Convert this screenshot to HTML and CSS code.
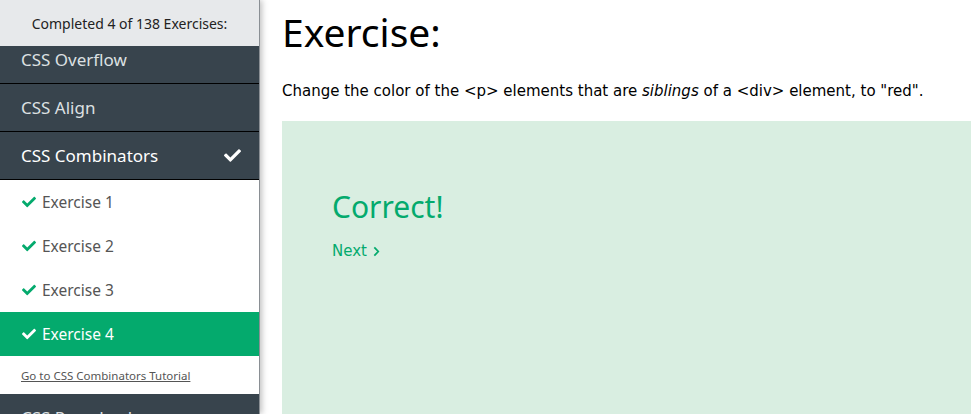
FILE: index.html
```html
<!DOCTYPE html>
<html>
<head>
<meta charset="utf-8">
<link rel="stylesheet" href="styles.css">
</head>
<body>
<div class="page">
  <aside class="sidebar">
    <div class="progress">Completed 4 of 138 Exercises:</div>
    <div class="scroller">
      <ul class="topics">
        <li class="topic first">CSS Overflow</li>
        <li class="topic">CSS Align</li>
        <li class="topic active">CSS Combinators
          <svg class="topic-check" viewBox="0 0 512 512"><path d="M173.898 439.404l-166.4-166.4c-9.997-9.997-9.997-26.206 0-36.204l36.203-36.204c9.997-9.998 26.207-9.998 36.204 0L192 312.69 432.095 72.596c9.997-9.997 26.207-9.997 36.204 0l36.203 36.204c9.997 9.997 9.997 26.206 0 36.204l-294.4 294.401c-9.998 9.997-26.207 9.997-36.204-.001z"/></svg>
        </li>
        <li class="exercises">
          <a class="ex"><svg class="ex-check" viewBox="0 0 512 512"><path d="M173.898 439.404l-166.4-166.4c-9.997-9.997-9.997-26.206 0-36.204l36.203-36.204c9.997-9.998 26.207-9.998 36.204 0L192 312.69 432.095 72.596c9.997-9.997 26.207-9.997 36.204 0l36.203 36.204c9.997 9.997 9.997 26.206 0 36.204l-294.4 294.401c-9.998 9.997-26.207 9.997-36.204-.001z"/></svg>Exercise 1</a>
          <a class="ex"><svg class="ex-check" viewBox="0 0 512 512"><path d="M173.898 439.404l-166.4-166.4c-9.997-9.997-9.997-26.206 0-36.204l36.203-36.204c9.997-9.998 26.207-9.998 36.204 0L192 312.69 432.095 72.596c9.997-9.997 26.207-9.997 36.204 0l36.203 36.204c9.997 9.997 9.997 26.206 0 36.204l-294.4 294.401c-9.998 9.997-26.207 9.997-36.204-.001z"/></svg>Exercise 2</a>
          <a class="ex"><svg class="ex-check" viewBox="0 0 512 512"><path d="M173.898 439.404l-166.4-166.4c-9.997-9.997-9.997-26.206 0-36.204l36.203-36.204c9.997-9.998 26.207-9.998 36.204 0L192 312.69 432.095 72.596c9.997-9.997 26.207-9.997 36.204 0l36.203 36.204c9.997 9.997 9.997 26.206 0 36.204l-294.4 294.401c-9.998 9.997-26.207 9.997-36.204-.001z"/></svg>Exercise 3</a>
          <a class="ex current"><svg class="ex-check" viewBox="0 0 512 512"><path d="M173.898 439.404l-166.4-166.4c-9.997-9.997-9.997-26.206 0-36.204l36.203-36.204c9.997-9.998 26.207-9.998 36.204 0L192 312.69 432.095 72.596c9.997-9.997 26.207-9.997 36.204 0l36.203 36.204c9.997 9.997 9.997 26.206 0 36.204l-294.4 294.401c-9.998 9.997-26.207 9.997-36.204-.001z"/></svg>Exercise 4</a>
          <div class="tutorial"><a class="tut-link">Go to CSS Combinators Tutorial</a></div>
        </li>
        <li class="topic">CSS Pseudo-classes</li>
      </ul>
    </div>
  </aside>
  <main class="main">
    <h1 class="title">Exercise:</h1>
    <p class="task">Change the color of the &lt;p&gt; elements that are <i>siblings</i> of a &lt;div&gt; element, to "red".</p>
    <section class="result">
      <h2 class="correct">Correct!</h2>
      <a class="next">Next <svg class="chev" viewBox="0 0 8 12"><path d="M1.5 1.2 L6 6 L1.5 10.8" fill="none" stroke="#04aa6d" stroke-width="2"/></svg></a>
    </section>
  </main>
</div>
</body>
</html>
```

FILE: styles.css
```css
* { box-sizing: border-box; }
html, body { margin: 0; padding: 0; background: #fff; }
body { font-family: "Noto Sans", "Open Sans", sans-serif; overflow: hidden; }

.page { display: flex; height: 414px; width: 971px; overflow: hidden; }

.sidebar {
  width: 260px;
  flex: none;
  display: flex;
  flex-direction: column;
  border-right: 1px solid #8a8f94;
  box-shadow: 2px 0 6px rgba(0,0,0,0.25);
  z-index: 2;
  background: #38444d;
}
.progress {
  height: 46px;
  flex: none;
  background: #e7e9eb;
  color: #222;
  font-size: 14px;
  display: flex;
  align-items: center;
  justify-content: center;
  position: relative;
  z-index: 1;
}
.scroller { flex: 1; overflow: hidden; }
.topics { list-style: none; margin: -10px 0 0 0; padding: 0; }
.topic {
  height: 48px;
  border-bottom: 1px solid #000;
  color: #dde0e2;
  font-size: 17px;
  padding: 0 18px 0 21px;
  display: flex;
  align-items: center;
  justify-content: space-between;
}
.topic.active { color: #fff; }
.topic-check { width: 17px; height: 17px; fill: #fff; }

.exercises { background: #fff; display: flex; flex-direction: column; }
.ex {
  height: 44px;
  display: flex;
  align-items: center;
  padding-left: 22px;
  color: #555;
  font-size: 15.5px;
}
.ex-check { width: 14px; height: 14px; fill: #04aa6d; margin-right: 6px; }
.ex.current { background: #04aa6d; color: #fff; }
.ex.current .ex-check { fill: #fff; }
.tutorial { height: 38px; display: flex; align-items: center; padding-left: 21px; }
.tut-link { color: #555; font-size: 11.5px; text-decoration: underline; }

.main { flex: 1; padding-left: 22px; min-width: 0; }
.title {
  margin: 0;
  font-weight: 400;
  font-size: 39px;
  line-height: 1;
  padding-top: 12px;
  color: #000;
}
.task {
  font-family: "DejaVu Sans", Verdana, sans-serif;
  font-size: 15px;
  margin: 30px 0 0 0;
  line-height: 20px;
  color: #000;
}
.result {
  margin-top: 20px;
  height: 300px;
  width: 700px;
  background: #d9eee1;
  padding: 66px 0 0 50px;
}
.correct {
  margin: 0;
  font-weight: 400;
  font-size: 30px;
  line-height: 40px;
  color: #04aa6d;
}
.next {
  display: inline-flex;
  align-items: center;
  gap: 6px;
  margin-top: 15px;
  font-family: "DejaVu Sans", Verdana, sans-serif;
  font-size: 15px;
  color: #04aa6d;
}
.chev { width: 7px; height: 11px; }
```
